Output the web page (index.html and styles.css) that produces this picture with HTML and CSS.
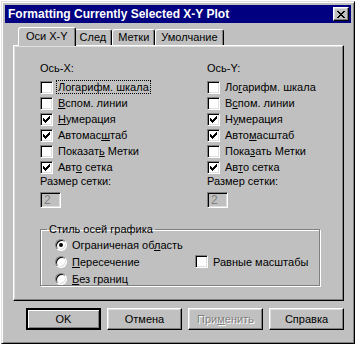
FILE: index.html
```html
<!DOCTYPE html>
<html lang="ru">
<head>
    <meta charset="UTF-8">
    <title>Formatting Currently Selected X-Y Plot</title>
    <link rel="stylesheet" href="styles.css">
</head>
<body>

<div class="window">
    <div class="titlebar">
        <span class="title">Formatting Currently Selected X-Y Plot</span>
        <span class="close">
            <svg width="8" height="7" viewBox="0 0 8 7"><path d="M0 0h2v1h1v1h2v-1h1v-1h2v1h-1v1h-1v1h-1v1h1v1h1v1h1v1h-2v-1h-1v-1h-2v1h-1v1h-2v-1h1v-1h1v-1h1v-1h-1v-1h-1v-1h-1z" fill="#000"/></svg>
        </span>
    </div>

    <div class="body">
        <div class="tabs">
            <div class="tab active">Оси X-Y</div>
            <div class="tab">След</div>
            <div class="tab">Метки</div>
            <div class="tab">Умолчание</div>
        </div>

        <div class="panel">
            <div class="columns">
                <div class="axis">
                    <div class="heading">Ось-X:</div>
                    <div class="check"><span class="box"></span><span class="focus">Логарифм. шкала</span></div>
                    <div class="check"><span class="box"></span><span><u>В</u>спом. линии</span></div>
                    <div class="check"><span class="box checked"></span><span><u>Н</u>умерация</span></div>
                    <div class="check"><span class="box checked"></span><span>Автомас<u>ш</u>таб</span></div>
                    <div class="check"><span class="box"></span><span>Показат<u>ь</u> Метки</span></div>
                    <div class="check"><span class="box checked"></span><span>Авт<u>о</u> сетка</span></div>
                    <div class="heading">Размер сетки:</div>
                    <div class="field">2</div>
                </div>
                <div class="axis">
                    <div class="heading">Ось-Y:</div>
                    <div class="check"><span class="box"></span><span>Ло<u>г</u>арифм. шкала</span></div>
                    <div class="check"><span class="box"></span><span>В<u>с</u>пом. линии</span></div>
                    <div class="check"><span class="box checked"></span><span>Н<u>у</u>мерация</span></div>
                    <div class="check"><span class="box checked"></span><span>Авто<u>м</u>асштаб</span></div>
                    <div class="check"><span class="box"></span><span>Пока<u>з</u>ать Метки</span></div>
                    <div class="check"><span class="box checked"></span><span>Ав<u>т</u>о сетка</span></div>
                    <div class="heading">Размер сетки:</div>
                    <div class="field">2</div>
                </div>
            </div>

            <fieldset class="group">
                <legend>Стиль осей графика</legend>
                <div class="group-body">
                    <div class="radios">
                        <div class="check"><span class="radio selected"></span><span>Ограниченая об<u>л</u>асть</span></div>
                        <div class="check"><span class="radio"></span><span><u>П</u>ересечение</span></div>
                        <div class="check"><span class="radio"></span><span><u>Б</u>ез границ</span></div>
                    </div>
                    <div class="check equal"><span class="box"></span><span>Равные масштабы</span></div>
                </div>
            </fieldset>
        </div>

        <div class="buttons">
            <div class="btn default">OK</div>
            <div class="btn">Отмена</div>
            <div class="btn disabled">При<u>м</u>енить</div>
            <div class="btn">Справка</div>
        </div>
    </div>
</div>

</body>
</html>
```

FILE: styles.css
```css
body {
    margin: 0;
    background-color: #FFFFFF;
    font-family: 'Liberation Sans', Arial, sans-serif;
    font-size: 11px;
    color: #000000;
}

.window {
    margin: 1px 0 0 1px;
    width: 354px;
    height: 343px;
    box-sizing: border-box;
    background-color: #C0C0C0;
    border: 1px solid;
    border-color: #DFDFDF #000000 #000000 #DFDFDF;
    box-shadow: inset 1px 1px #FFFFFF, inset -1px -1px #808080;
    padding: 3px;
}

.titlebar {
    height: 18px;
    background-color: #000080;
    color: #FFFFFF;
    display: flex;
    align-items: center;
    justify-content: space-between;
    padding: 0 2px 0 3px;
}

.title {
    font-weight: bold;
    font-size: 12px;
}

.close {
    width: 16px;
    height: 14px;
    box-sizing: border-box;
    background-color: #C0C0C0;
    border: 1px solid;
    border-color: #FFFFFF #000000 #000000 #FFFFFF;
    box-shadow: inset -1px -1px #808080, inset 1px 1px #DFDFDF;
    display: flex;
    align-items: center;
    justify-content: center;
}

.body {
    padding: 4px 7px 0 8px;
}

/* tabs */

.tabs {
    display: flex;
    align-items: flex-end;
    height: 18px;
    padding-left: 7px;
}

.tab {
    height: 16px;
    line-height: 15px;
    padding: 0 5px;
    box-sizing: border-box;
    border: 1px solid;
    border-bottom: none;
    border-color: #FFFFFF #000000 #FFFFFF #FFFFFF;
    border-radius: 3px 3px 0 0;
    box-shadow: inset -1px 0 #808080;
    background-color: #C0C0C0;
}

.tab.active {
    height: 19px;
    margin: 0 -2px -1px;
    padding: 1px 7px 0;
    position: relative;
    z-index: 1;
}

/* panel */

.panel {
    height: 256px;
    box-sizing: border-box;
    border: 1px solid;
    border-color: #FFFFFF #000000 #000000 #FFFFFF;
    box-shadow: inset -1px -1px #808080, inset 1px 1px #DFDFDF;
    padding: 16px 0 0 26px;
}

.columns {
    display: grid;
    grid-template-columns: 167px 1fr;
}

.heading {
    height: 13px;
    line-height: 13px;
    margin-bottom: 4px;
}

.check {
    display: flex;
    align-items: center;
    gap: 5px;
    height: 16px;
}

.axis .heading:nth-of-type(2) {
    margin-top: 1px;
    margin-bottom: 3px;
}

.box {
    width: 13px;
    height: 13px;
    box-sizing: border-box;
    background-color: #FFFFFF;
    border: 1px solid;
    border-color: #808080 #FFFFFF #FFFFFF #808080;
    box-shadow: inset 1px 1px #000000, inset -1px -1px #DFDFDF;
    flex-shrink: 0;
}

.box.checked {
    background-image: url("data:image/svg+xml,%3Csvg xmlns='http://www.w3.org/2000/svg' width='7' height='7' viewBox='0 0 7 7'%3E%3Cpath d='M0 2h1v1h1v1h1v-1h1v-1h1v-1h1v-1h1v3h-1v1h-1v1h-1v1h-1v1h-1v-1h-1v-1h-1z' fill='%23000'/%3E%3C/svg%3E");
    background-repeat: no-repeat;
    background-position: 2px 2px;
}

.focus {
    outline: 1px dotted #000000;
    outline-offset: 0;
    padding: 0 1px;
    margin-left: -1px;
}

.field {
    width: 21px;
    height: 16px;
    box-sizing: border-box;
    border: 1px solid;
    border-color: #808080 #FFFFFF #FFFFFF #808080;
    box-shadow: inset 1px 1px #000000, inset -1px -1px #DFDFDF;
    color: #808080;
    font-size: 12px;
    line-height: 14px;
    padding-left: 3px;
}

/* group box */

.group {
    margin: 15px 0 0 0;
    width: 280px;
    height: 63px;
    box-sizing: border-box;
    border: 1px solid #808080;
    box-shadow: inset 1px 1px #FFFFFF, 1px 1px #FFFFFF;
    padding: 0 0 0 14px;
}

.group legend {
    padding: 0 2px;
    margin-left: -8px;
    line-height: 12px;
}

.group-body {
    display: grid;
    grid-template-columns: 140px 1fr;
    padding-top: 1px;
}

.radios .check {
    height: 17px;
}

.radio {
    width: 12px;
    height: 12px;
    box-sizing: border-box;
    border-radius: 50%;
    background-color: #FFFFFF;
    border: 1px solid;
    border-color: #808080 #FFFFFF #FFFFFF #808080;
    box-shadow: inset 1px 1px #000000, inset -1px -1px #DFDFDF;
    display: flex;
    align-items: center;
    justify-content: center;
    flex-shrink: 0;
}

.radio.selected::after {
    content: "";
    width: 4px;
    height: 4px;
    border-radius: 50%;
    background-color: #000000;
}

.equal {
    align-self: center;
}

/* buttons */

.buttons {
    display: flex;
    justify-content: flex-end;
    gap: 6px;
    margin-top: 7px;
}

.btn {
    width: 75px;
    height: 22px;
    box-sizing: border-box;
    border: 1px solid;
    border-color: #FFFFFF #000000 #000000 #FFFFFF;
    box-shadow: inset -1px -1px #808080, inset 1px 1px #DFDFDF;
    display: flex;
    align-items: center;
    justify-content: center;
    font-size: 11px;
}

.btn.default {
    border: 2px solid #000000;
    box-shadow: inset 1px 1px #FFFFFF, inset -1px -1px #808080;
}

.btn.disabled {
    color: #808080;
    text-shadow: 1px 1px #FFFFFF;
}
```
